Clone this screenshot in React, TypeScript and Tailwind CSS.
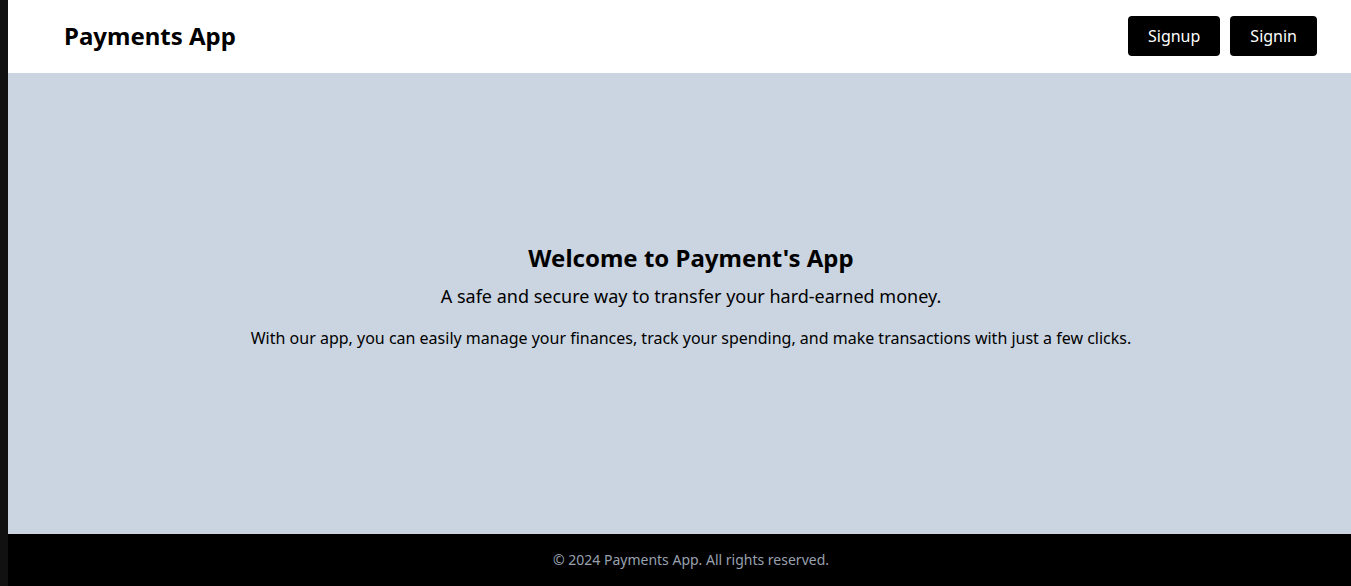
export default function App() {
  return (
    <div className="flex h-[586px] w-full bg-[#111111]" style={{ fontFamily: '"Noto Sans", "Open Sans", sans-serif' }}>
      <div className="w-[8px] shrink-0" />
      <div className="flex flex-1 flex-col">
        <header className="flex h-[73px] items-center justify-between bg-white pb-[2px] pl-[56px] pr-[34px]">
          <h1 className="text-2xl font-bold text-black">Payments App</h1>
          <div className="flex gap-[10px]">
            <button className="h-[40px] rounded-[4px] bg-black px-5 text-base text-white">Signup</button>
            <button className="h-[40px] rounded-[4px] bg-black px-5 text-base text-white">Signin</button>
          </div>
        </header>
        <main className="flex flex-1 flex-col items-center justify-center bg-[#cbd5e1] pl-[23px] pb-[16px] text-black">
          <h2 className="text-2xl font-bold">Welcome to Payment's App</h2>
          <p className="mt-[8px] text-lg">A safe and secure way to transfer your hard-earned money.</p>
          <p className="mt-[16px] text-base">With our app, you can easily manage your finances, track your spending, and make transactions with just a few clicks.</p>
        </main>
        <footer className="flex h-[52px] items-center justify-center bg-black pl-[23px] text-sm text-gray-400">
          © 2024 Payments App. All rights reserved.
        </footer>
      </div>
    </div>
  );
}
